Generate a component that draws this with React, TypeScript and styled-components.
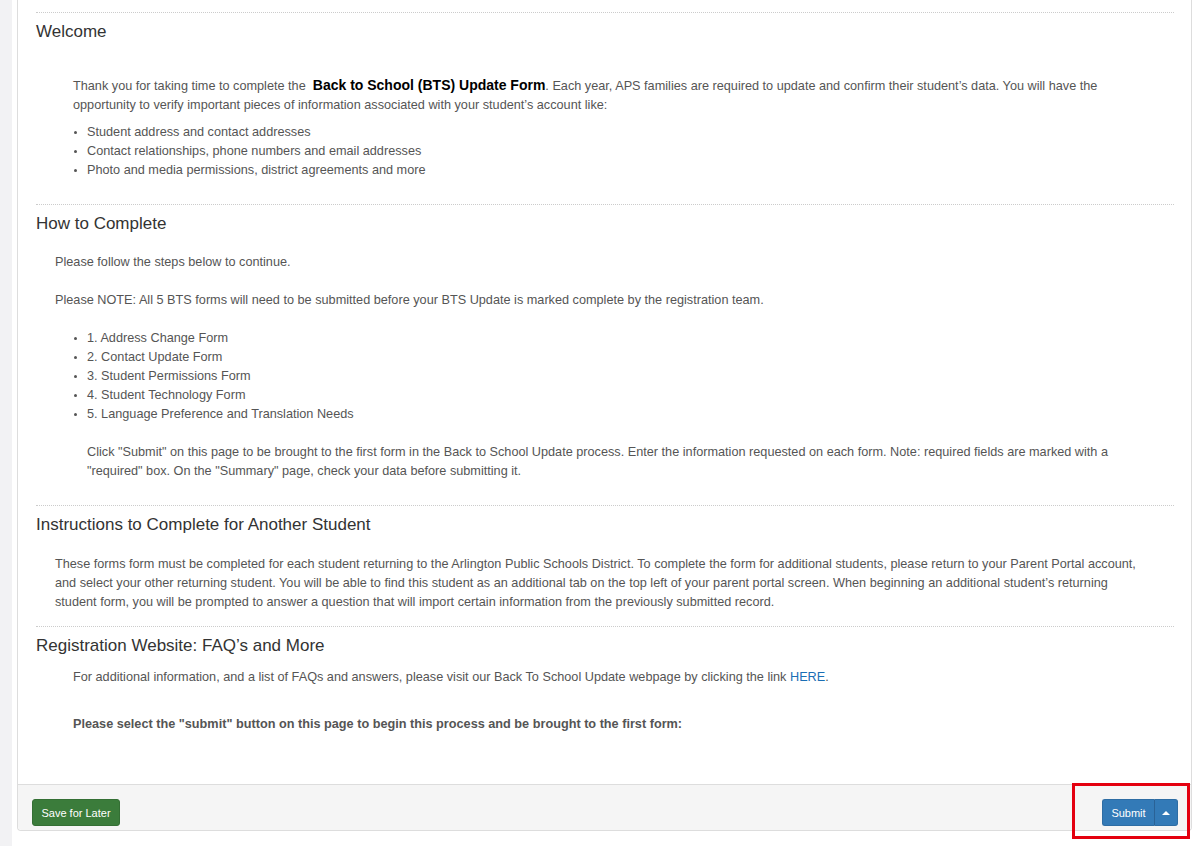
import * as React from "react";
import styled, { createGlobalStyle } from "styled-components";

const GlobalStyle = createGlobalStyle`
  html, body {
    margin: 0;
    padding: 0;
    background: #ffffff;
    font-family: "Liberation Sans", Arial, Helvetica, sans-serif;
  }
`;

const Page = styled.div`
  display: flex;
  min-height: 846px;
`;

const SideStrip = styled.div`
  width: 12px;
  flex: 0 0 12px;
  background: #f2f2f4;
`;

const Main = styled.main`
  flex: 1;
  padding: 0 8px 0 5px;
`;

const Panel = styled.div`
  background: #ffffff;
  border: 1px solid #dddddd;
  border-top: none;
  border-radius: 0 0 4px 4px;
`;

const PanelBody = styled.div`
  padding: 12px 17px 50px 18px;
`;

const Section = styled.section<{ $bottom: number }>`
  border-top: 1px dotted #cccccc;
  padding-bottom: ${(p) => p.$bottom}px;
`;

const Heading = styled.h3`
  margin: 9px 0 0;
  font-size: 17px;
  line-height: 20px;
  font-weight: normal;
  color: #333333;
`;

const Text = styled.p<{ $indent: number; $top: number; $bold?: boolean }>`
  margin: ${(p) => p.$top}px 0 0 ${(p) => p.$indent}px;
  font-size: 12.7px;
  line-height: 19px;
  color: #555555;
  font-weight: ${(p) => (p.$bold ? "bold" : "normal")};
`;

const Strong = styled.strong`
  font-size: 14px;
  color: #000000;
`;

const Bullets = styled.ul<{ $top: number }>`
  margin: ${(p) => p.$top}px 0 0;
  padding-left: 51px;
  list-style: disc;
  font-size: 12.7px;
  line-height: 19px;
  color: #555555;

  li::marker {
    font-size: 10px;
  }
`;

const Link = styled.a`
  color: #1a6eb4;
  text-decoration: none;
`;

const Footer = styled.div`
  display: flex;
  align-items: center;
  justify-content: space-between;
  background: #f5f5f5;
  border-top: 1px solid #dddddd;
  border-radius: 0 0 4px 4px;
  padding: 14px 13px 4px 14px;
`;

const SaveButton = styled.button`
  height: 27px;
  width: 88px;
  padding: 0;
  border: 1px solid #346f34;
  border-radius: 3px;
  background: #3b7c3b;
  color: #ffffff;
  font-family: inherit;
  font-size: 11px;
  cursor: pointer;
`;

const SubmitWrap = styled.div`
  position: relative;
  display: flex;
`;

const SubmitButton = styled.button`
  height: 27px;
  width: 53px;
  padding: 0;
  border: 1px solid #2e6da4;
  border-right-color: #2a6296;
  border-radius: 3px 0 0 3px;
  background: #337ab7;
  color: #ffffff;
  font-family: inherit;
  font-size: 11px;
  cursor: pointer;
`;

const CaretButton = styled.button`
  height: 27px;
  width: 23px;
  padding: 0;
  border: 1px solid #2e6da4;
  border-left: none;
  border-radius: 0 3px 3px 0;
  background: #337ab7;
  display: flex;
  align-items: center;
  justify-content: center;
  cursor: pointer;
`;

const Caret = styled.span`
  width: 0;
  height: 0;
  border-left: 4px solid transparent;
  border-right: 4px solid transparent;
  border-bottom: 4px solid #ffffff;
`;

const Highlight = styled.div`
  position: absolute;
  left: -30px;
  top: -16px;
  width: 118px;
  height: 56px;
  box-sizing: border-box;
  border: 3px solid #e4000f;
  pointer-events: none;
`;

const App: React.FunctionComponent = (): React.ReactElement => {
  return (
    <>
      <GlobalStyle />
      <Page>
        <SideStrip />
        <Main>
          <Panel>
            <PanelBody>
              <Section $bottom={24}>
                <Heading>Welcome</Heading>
                <Text $indent={37} $top={34}>
                  Thank you for taking time to complete the&nbsp;{" "}
                  <Strong>Back to School (BTS) Update Form</Strong>. Each year,
                  APS families are required to update and confirm their
                  student’s data. You will have the
                  <br />
                  opportunity to verify important pieces of information
                  associated with your student’s account like:
                </Text>
                <Bullets $top={8}>
                  <li>Student address and contact addresses</li>
                  <li>Contact relationships, phone numbers and email addresses</li>
                  <li>Photo and media permissions, district agreements and more</li>
                </Bullets>
              </Section>

              <Section $bottom={24}>
                <Heading>How to Complete</Heading>
                <Text $indent={19} $top={19}>
                  Please follow the steps below to continue.
                </Text>
                <Text $indent={19} $top={19}>
                  Please NOTE: All 5 BTS forms will need to be submitted before
                  your BTS Update is marked complete by the registration team.
                </Text>
                <Bullets $top={19}>
                  <li>1. Address Change Form</li>
                  <li>2. Contact Update Form</li>
                  <li>3. Student Permissions Form</li>
                  <li>4. Student Technology Form</li>
                  <li>5. Language Preference and Translation Needs</li>
                </Bullets>
                <Text $indent={51} $top={19}>
                  Click "Submit" on this page to be brought to the first form in
                  the Back to School Update process. Enter the information
                  requested on each form. Note: required fields are marked with a
                  <br />
                  "required" box. On the "Summary" page, check your data before
                  submitting it.
                </Text>
              </Section>

              <Section $bottom={14}>
                <Heading>Instructions to Complete for Another Student</Heading>
                <Text $indent={19} $top={20}>
                  These forms form must be completed for each student returning to
                  the Arlington Public Schools District. To complete the form for
                  additional students, please return to your Parent Portal
                  account,
                  <br />
                  and select your other returning student. You will be able to
                  find this student as an additional tab on the top left of your
                  parent portal screen. When beginning an additional student’s
                  returning
                  <br />
                  student form, you will be prompted to answer a question that
                  will import certain information from the previously submitted
                  record.
                </Text>
              </Section>

              <Section $bottom={0}>
                <Heading>Registration Website: FAQ’s and More</Heading>
                <Text $indent={37} $top={12}>
                  For additional information, and a list of FAQs and answers,
                  please visit our Back To School Update webpage by clicking the
                  link <Link href="#">HERE</Link>.
                </Text>
                <Text $indent={37} $top={28} $bold>
                  Please select the "submit" button on this page to begin this
                  process and be brought to the first form:
                </Text>
              </Section>
            </PanelBody>

            <Footer>
              <SaveButton type="button">Save for Later</SaveButton>
              <SubmitWrap>
                <SubmitButton type="button">Submit</SubmitButton>
                <CaretButton type="button" aria-label="more options">
                  <Caret />
                </CaretButton>
                <Highlight />
              </SubmitWrap>
            </Footer>
          </Panel>
        </Main>
      </Page>
    </>
  );
};

export default App;
